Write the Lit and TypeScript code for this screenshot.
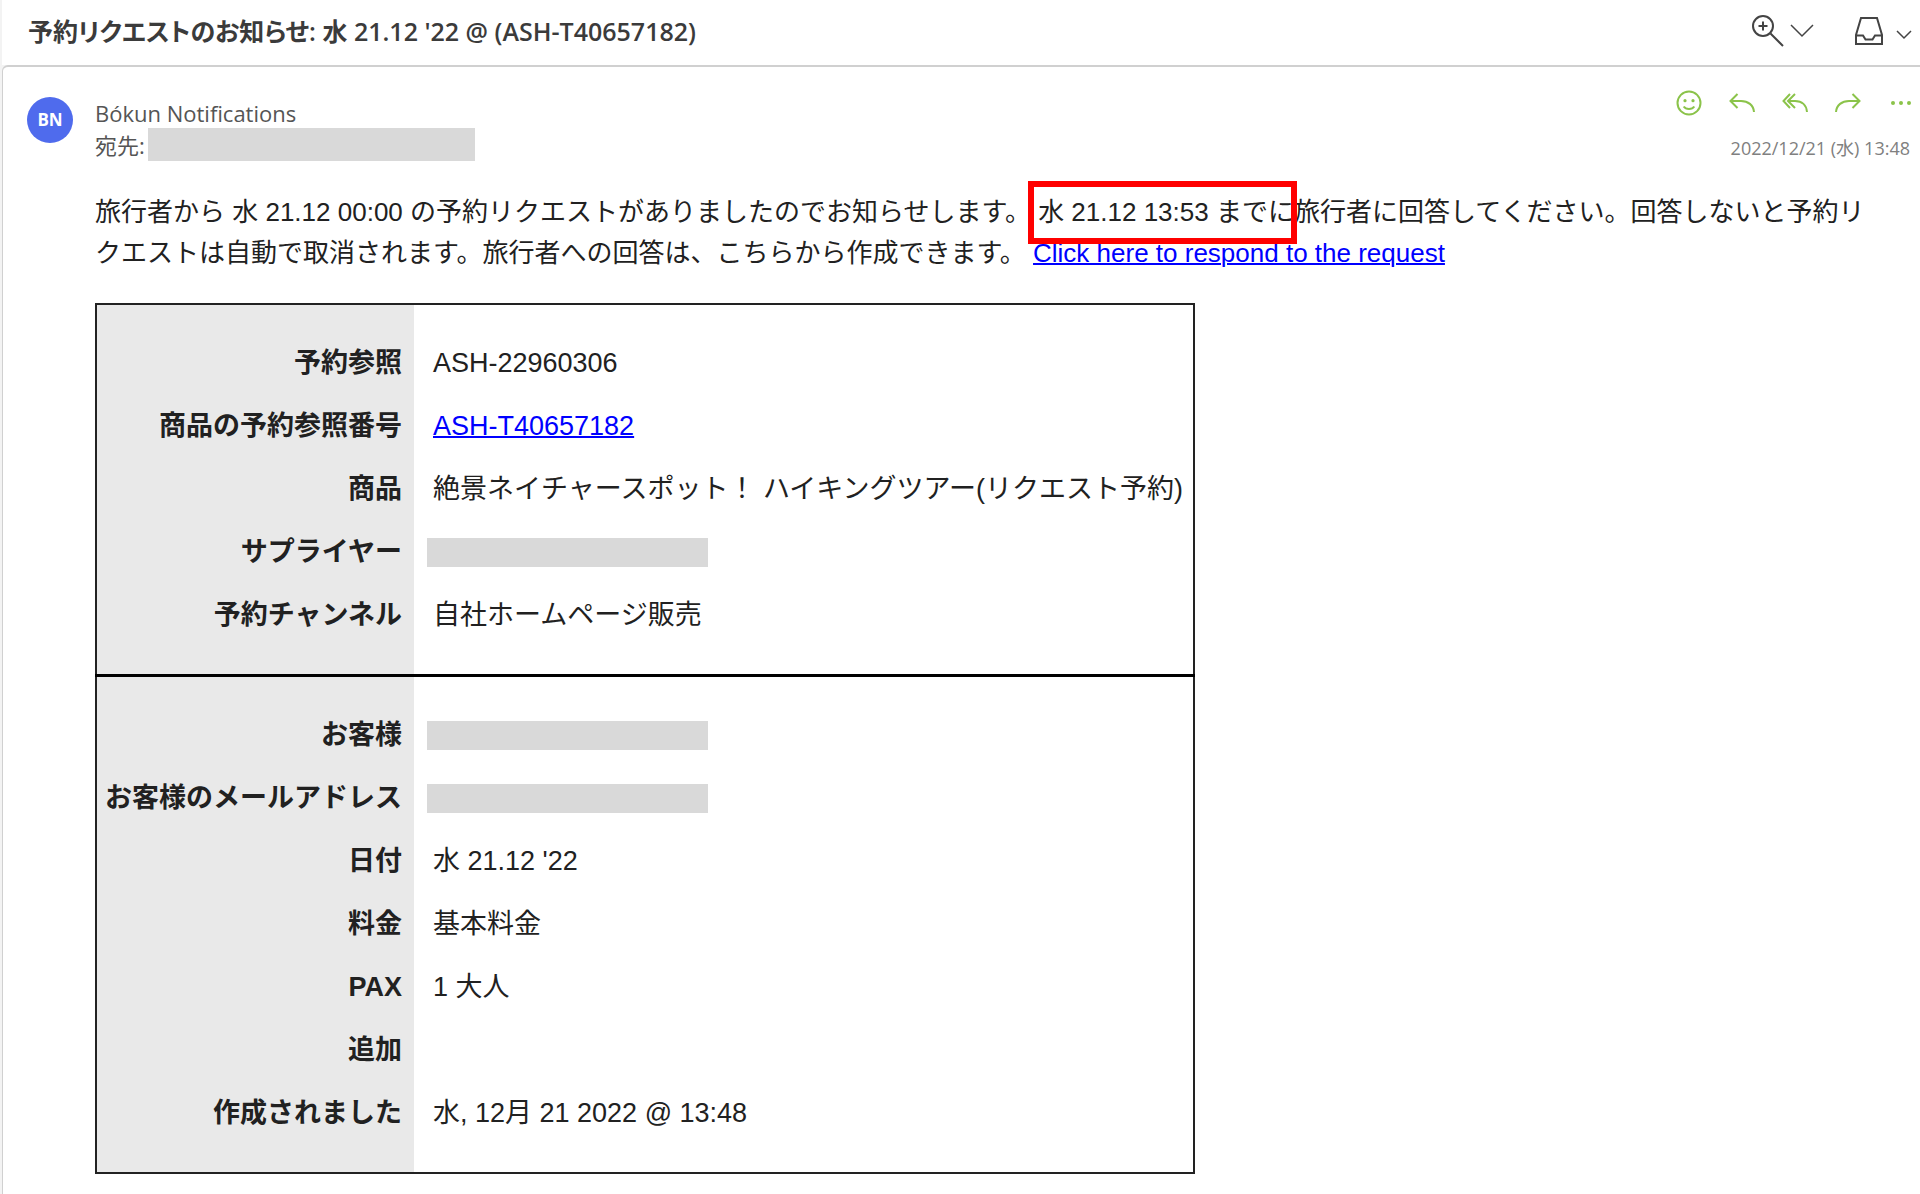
import { LitElement, html, css, svg, nothing } from "lit";
import { customElement } from "lit/decorators.js";

interface Row {
  label: string;
  value?: string;
  link?: boolean;
  redacted?: boolean;
}

const BOOKING: Row[] = [
  { label: "予約参照", value: "ASH-22960306" },
  { label: "商品の予約参照番号", value: "ASH-T40657182", link: true },
  { label: "商品", value: "絶景ネイチャースポット！ ハイキングツアー(リクエスト予約)" },
  { label: "サプライヤー", redacted: true },
  { label: "予約チャンネル", value: "自社ホームページ販売" },
];

const CUSTOMER: Row[] = [
  { label: "お客様", redacted: true },
  { label: "お客様のメールアドレス", redacted: true },
  { label: "日付", value: "水 21.12 '22" },
  { label: "料金", value: "基本料金" },
  { label: "PAX", value: "1 大人" },
  { label: "追加" },
  { label: "作成されました", value: "水, 12月 21 2022 @ 13:48" },
];

const ICONS = {
  smile: svg`<circle cx="14" cy="14" r="11.500"/><circle class="dot" cx="10" cy="11.700" r="1.600"/><circle class="dot" cx="18" cy="11.700" r="1.600"/><path d="M8.700 17.500c1.200 1.800 3.100 2.500 5.300 2.500s4.100-.7 5.300-2.500"/>`,
  reply: svg`<path d="M9.500 5 2.500 12l7 7M2.500 12H13c7 0 12.500 4 13 11"/>`,
  replyAll: svg`<path d="M9 5 2.500 12 9 19M14 5l-7 7 7 7M7 12h7c7 0 11.500 4 12 11"/>`,
  forward: svg`<path d="m18.500 5 7 7-7 7M25.500 12H15C8 12 2.500 16 2 23"/>`,
  more: svg`<circle class="dot" cx="6" cy="14" r="2"/><circle class="dot" cx="14" cy="14" r="2"/><circle class="dot" cx="22" cy="14" r="2"/>`,
};

@customElement("app-root")
export class AppRoot extends LitElement {
  static styles = css`
    :host {
      display: block;
      min-height: 100vh;
      box-sizing: border-box;
      padding-left: 2px;
      background: #f3f3f3;
      color: #212121;
      font-family: "Liberation Sans", "Noto Sans CJK JP", sans-serif;
    }
    .page {
      display: flex;
      flex-direction: column;
      min-height: 100vh;
    }
    .titlebar {
      display: flex;
      align-items: center;
      justify-content: space-between;
      padding: 13px 8px 16px 26px;
      background: #fff;
    }
    .title {
      margin: 0;
      font: 600 25px/36px "Open Sans", "Noto Sans CJK JP", sans-serif;
      font-feature-settings: "palt";
      color: #3b3b3b;
    }
    .tools,
    .actions {
      display: flex;
      align-items: center;
    }
    .tools {
      gap: 40px;
    }
    .actions {
      gap: 25px;
    }
    button {
      display: flex;
      align-items: center;
      gap: 6px;
      padding: 0;
      border: 0;
      background: none;
      color: #444;
    }
    .move {
      gap: 12px;
    }
    svg {
      display: block;
      fill: none;
      stroke: currentColor;
      stroke-width: 2;
    }
    .chevron {
      stroke-width: 1.5;
    }
    .dot {
      fill: currentColor;
      stroke: none;
    }
    .actions button {
      color: #8bc34a;
    }
    .message {
      flex: 1;
      padding: 22px 5px 20px 24px;
      border: solid #d0d0d0;
      border-width: 2px 0 0 1px;
      border-top-left-radius: 6px;
      background: #fff;
    }
    .head {
      display: flex;
      align-items: flex-start;
    }
    .avatar {
      display: grid;
      place-items: center;
      width: 46px;
      height: 46px;
      margin-top: 8px;
      border-radius: 50%;
      background: #4f6bed;
      color: #fff;
      font: 700 17px/24px "Open Sans", sans-serif;
    }
    .who {
      flex: 1;
      padding: 9px 0 0 22px;
      font: 400 22px/30px "Open Sans", "Noto Sans CJK JP", sans-serif;
      color: #555;
    }
    .to {
      display: flex;
      align-items: center;
      gap: 3px;
    }
    .bar {
      background: #d9d9d9;
    }
    .to .bar {
      width: 327px;
      height: 33px;
    }
    .meta {
      display: flex;
      flex-direction: column;
      align-items: flex-end;
      gap: 18px;
    }
    time {
      padding-right: 5px;
      font: 400 18px/26px "Open Sans", "Noto Sans CJK JP", sans-serif;
      color: #808080;
    }
    .body {
      padding-left: 68px;
    }
    .lead {
      margin: 0;
      padding: 31px 30px 29px 0;
      font-size: 26px;
      line-height: 41px;
    }
    .deadline {
      position: relative;
    }
    .deadline::after {
      content: "";
      position: absolute;
      inset: -16px -3px -17px -10px;
      border: 6px solid #f00;
    }
    a {
      color: #00f;
      text-decoration: underline;
      text-decoration-thickness: 2px;
    }
    table {
      border: 2px solid #222;
      border-collapse: collapse;
      font-size: 27px;
      line-height: 39px;
    }
    tbody + tbody {
      border-top: 3px solid #000;
    }
    th,
    td {
      padding: 12px 10px 12px 19px;
      text-align: left;
      white-space: nowrap;
    }
    th {
      padding: 12px 12px 12px 8px;
      background: #e9e9e9;
      text-align: right;
      font-weight: 700;
    }
    tr:first-child > * {
      padding-top: 39px;
    }
    tr:last-child > * {
      padding-bottom: 39px;
    }
    td .bar {
      width: 281px;
      height: 29px;
      margin-left: -6px;
    }
  `;

  private row(r: Row) {
    return html`<tr>
      <th scope="row">${r.label}</th>
      <td>
        ${r.redacted
          ? html`<div class="bar"></div>`
          : r.link
            ? html`<a href="#booking">${r.value}</a>`
            : (r.value ?? nothing)}
      </td>
    </tr>`;
  }

  private action(label: string, icon: unknown) {
    return html`<button type="button" aria-label=${label}>
      <svg width="28" height="28" viewBox="0 0 28 28">${icon}</svg>
    </button>`;
  }

  render() {
    return html`<div class="page">
      <header class="titlebar">
        <h1 class="title">予約リクエストのお知らせ: 水 21.12 '22 @ (ASH-T40657182)</h1>
        <div class="tools">
          <button type="button" aria-label="ズーム">
            <svg width="34" height="34" viewBox="0 0 34 34">
              <circle cx="13" cy="12" r="10" />
              <path d="M20.500 19.500 33 32M8.500 12h9M13 7.500v9" />
            </svg>
            <svg class="chevron" width="24" height="14" viewBox="0 0 24 14"><path d="m1 1 11 11L23 1" /></svg>
          </button>
          <button class="move" type="button" aria-label="移動">
            <svg width="30" height="30" viewBox="0 0 30 30">
              <path d="M7 2h16l5 17v9H2v-9zM2 19.500h7l2.500 4h7l2.500-4h7" />
            </svg>
            <svg class="chevron" width="16" height="20" viewBox="0 0 16 20"><path d="m1 10 7 7 7-7" /></svg>
          </button>
        </div>
      </header>
      <main class="message">
        <div class="head">
          <div class="avatar">BN</div>
          <div class="who">
            <div>Bókun Notifications</div>
            <div class="to">宛先:<span class="bar"></span></div>
          </div>
          <div class="meta">
            <div class="actions">
              ${this.action("リアクション", ICONS.smile)}
              ${this.action("返信", ICONS.reply)}
              ${this.action("全員に返信", ICONS.replyAll)}
              ${this.action("転送", ICONS.forward)}
              ${this.action("その他", ICONS.more)}
            </div>
            <time datetime="2022-12-21T13:48">2022/12/21 (水) 13:48</time>
          </div>
        </div>
        <div class="body">
          <p class="lead">旅行者から 水 21.12 00:00 の予約リクエストがありましたのでお知らせします。 <span class="deadline">水 21.12 13:53 までに</span>旅行者に回答してください。回答しないと予約リクエストは自動で取消されます。旅行者への回答は、こちらから作成できます。 <a href="#respond">Click here to respond to the request</a></p>
          <table>
            <tbody>${BOOKING.map((r) => this.row(r))}</tbody>
            <tbody>${CUSTOMER.map((r) => this.row(r))}</tbody>
          </table>
        </div>
      </main>
    </div>`;
  }
}
